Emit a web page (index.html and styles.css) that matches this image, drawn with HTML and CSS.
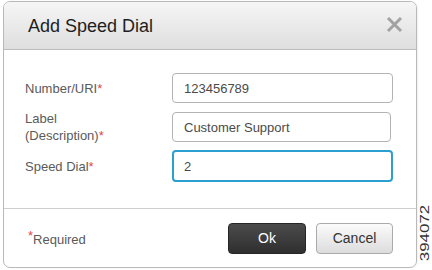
FILE: index.html
```html
<!DOCTYPE html>
<html>
<head>
<meta charset="utf-8">
<link rel="stylesheet" href="styles.css">
</head>
<body>
<div class="dialog">
  <div class="header">
    <h1 class="title">Add Speed Dial</h1>
    <button class="close" aria-label="Close">
      <svg width="17" height="17" viewBox="0 0 17 17"><path d="M2 2 L15 15 M15 2 L2 15" stroke="#a2a2a2" stroke-width="3" stroke-linecap="butt"/></svg>
    </button>
  </div>
  <div class="body">
    <div class="label">Number/URI<span class="req">*</span></div>
    <div class="field">123456789</div>
    <div class="label">Label<br>(Description)<span class="req">*</span></div>
    <div class="field short">Customer Support</div>
    <div class="label">Speed Dial<span class="req">*</span></div>
    <div class="field focus">2</div>
  </div>
  <div class="footer">
    <div class="required"><span class="req sup">*</span>Required</div>
    <div class="actions">
      <button class="btn ok">Ok</button>
      <button class="btn cancel">Cancel</button>
    </div>
  </div>
</div>
<div class="figno">394072</div>
</body>
</html>
```
FILE: styles.css
```css
html, body {
  margin: 0;
  padding: 0;
  background: #fff;
  font-family: "Liberation Sans", Arial, sans-serif;
}
body {
  width: 432px;
  height: 270px;
  position: relative;
  overflow: hidden;
}
.dialog {
  margin: 1px 0 0 3px;
  width: 412px;
  height: 265px;
  border: 1px solid #b9b9b9;
  border-radius: 7px;
  display: flex;
  flex-direction: column;
  overflow: hidden;
  box-shadow: 1px 0 2px rgba(0,0,0,0.06);
}
.header {
  height: 47px;
  border-bottom: 1px solid #bdbdbd;
  background: linear-gradient(#f6f6f6, #dedede);
  display: flex;
  align-items: center;
  justify-content: space-between;
  padding: 0 13px 0 24px;
}
.title {
  margin: 0;
  font-size: 18px;
  font-weight: normal;
  color: #1e1e1e;
  position: relative;
  top: 1px;
}
.close {
  border: 0;
  background: none;
  padding: 0;
  width: 17px;
  height: 17px;
  display: flex;
  position: relative;
  top: -1px;
}
.body {
  flex: 1;
  display: grid;
  grid-template-columns: 147px 221px;
  grid-auto-rows: 30px;
  row-gap: 9px;
  align-items: center;
  align-content: start;
  padding: 23px 0 0 21px;
  border-bottom: 1px solid #cfcfcf;
}
.label {
  font-size: 13px;
  line-height: 17px;
  color: #5a5a5a;
}
.req {
  color: #e2464f;
}
.field {
  box-sizing: border-box;
  height: 30px;
  border: 1px solid #b3b3b3;
  border-radius: 4px;
  padding: 0 11px;
  font-size: 13px;
  color: #4a4a4a;
  display: flex;
  align-items: center;
}
.field.short {
  width: 219px;
}
.field.focus {
  border: 2px solid #2a9fd0;
  padding-left: 10px;
  height: 32px;
}
.footer {
  height: 58px;
  box-sizing: border-box;
  display: flex;
  align-items: center;
  justify-content: space-between;
  padding: 0 23px 0 24px;
}
.required {
  font-size: 13px;
  color: #5a5a5a;
  position: relative;
  top: 1px;
}
.sup {
  font-size: 13px;
  position: relative;
  top: -4px;
}
.actions {
  display: flex;
  gap: 10px;
}
.btn {
  height: 31px;
  border-radius: 4px;
  font-family: "Liberation Sans", Arial, sans-serif;
  font-size: 14px;
  padding: 0;
}
.ok {
  width: 78px;
  color: #fff;
  background: linear-gradient(#4b4b4b, #2f2f2f);
  border: 1px solid #262626;
}
.cancel {
  width: 77px;
  color: #333;
  background: linear-gradient(#fbfbfb, #dcdcdc);
  border: 1px solid #ababab;
}
.figno {
  position: absolute;
  left: 424px;
  top: 233px;
  font-size: 13px;
  color: #333;
  transform: translate(-50%, -50%) rotate(-90deg) scaleX(1.3);
  white-space: nowrap;
}
```
